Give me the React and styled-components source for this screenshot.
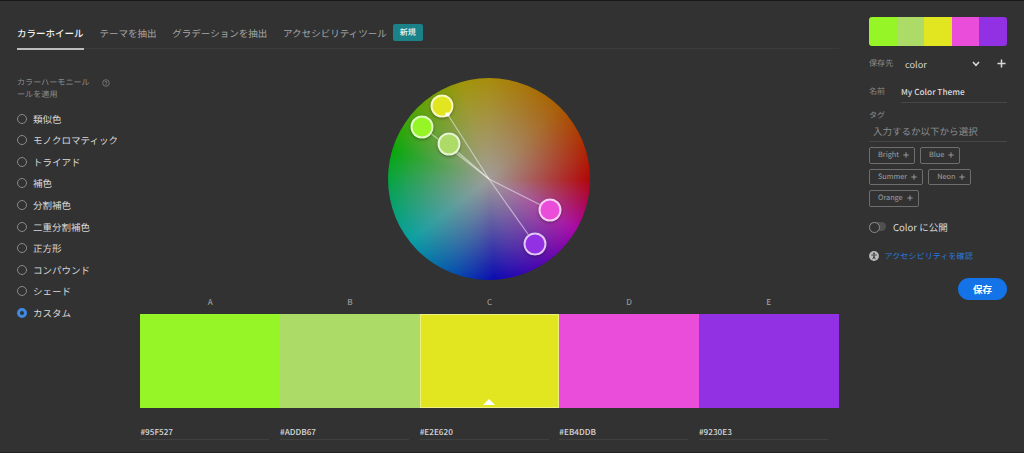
import React, { useState } from "react";
import styled, { createGlobalStyle } from "styled-components";

const swatches = [
  { label: "A", hex: "#95F527", x: 34, y: 48.5 },
  { label: "B", hex: "#ADDB67", x: 60.5, y: 66 },
  { label: "C", hex: "#E2E620", x: 54, y: 27.5 },
  { label: "D", hex: "#EB4DDB", x: 161.5, y: 131.5 },
  { label: "E", hex: "#9230E3", x: 147, y: 166 },
];

const tabs = ["カラーホイール", "テーマを抽出", "グラデーションを抽出", "アクセシビリティツール"];

const harmonies = [
  "類似色",
  "モノクロマティック",
  "トライアド",
  "補色",
  "分割補色",
  "二重分割補色",
  "正方形",
  "コンパウンド",
  "シェード",
  "カスタム",
];

const tags = ["Bright", "Blue", "Summer", "Neon", "Orange"];

const Plus = ({ size, weight }) => (
  <svg width={size} height={size} viewBox="0 0 10 10" fill="none" stroke="currentColor" strokeWidth={weight}>
    <path d="M5 0.5V9.5M0.5 5H9.5" />
  </svg>
);

const App = () => {
  const [tab, setTab] = useState(0);
  const [harmony, setHarmony] = useState("カスタム");
  const [active, setActive] = useState(2);

  return (
    <Page>
      <GlobalStyle />
      <Main>
        <Tabs>
          {tabs.map((name, index) => (
            <Tab key={name} $active={index === tab} onClick={() => setTab(index)}>
              {name}
            </Tab>
          ))}
          <Badge>新規</Badge>
        </Tabs>
        <Body>
          <Harmony>
            <HarmonyTitle>
              <span>カラーハーモニールールを適用</span>
              <svg width="8" height="8" viewBox="0 0 8 8" fill="none" stroke="currentColor">
                <circle cx="4" cy="4" r="3.3" strokeWidth="0.7" />
                <path d="M3 3.2C3 2 5 2 5 3.1C5 3.8 4 3.8 4 4.7M4 5.2V6" strokeWidth="0.8" />
              </svg>
            </HarmonyTitle>
            {harmonies.map((name) => (
              <Option key={name} onClick={() => setHarmony(name)}>
                <Radio $checked={name === harmony} />
                {name}
              </Option>
            ))}
          </Harmony>
          <Workspace>
            <Wheel>
              <Spokes viewBox="0 0 202 202">
                {swatches.map((s) => (
                  <line key={s.label} x1="101" y1="101" x2={s.x} y2={s.y} />
                ))}
              </Spokes>
              {swatches.map((s, index) => (
                <Marker
                  key={s.label}
                  $color={s.hex}
                  $active={index === active}
                  style={{ left: s.x, top: s.y }}
                />
              ))}
            </Wheel>
            <Swatches>
              {swatches.map((s, index) => (
                <Column key={s.label} onClick={() => setActive(index)}>
                  <Letter>{s.label}</Letter>
                  <Block $color={s.hex} $active={index === active}>
                    {index === active && (
                      <svg width="12" height="6" viewBox="0 0 12 6">
                        <path d="M0 6L6 0L12 6Z" fill="#fff" />
                      </svg>
                    )}
                  </Block>
                  <Hex>{s.hex}</Hex>
                </Column>
              ))}
            </Swatches>
          </Workspace>
        </Body>
      </Main>
      <Sidebar>
        <Preview>
          {swatches.map((s) => (
            <PreviewColor key={s.label} $color={s.hex} />
          ))}
        </Preview>
        <SaveTo>
          <Label>保存先</Label>
          <Library>color</Library>
          <svg width="8" height="6" viewBox="0 0 8 6" fill="none" stroke="#ddd" strokeWidth="1.5">
            <path d="M1 1L4 4.3L7 1" />
          </svg>
          <AddLibrary>
            <Plus size={9} weight={1.7} />
          </AddLibrary>
        </SaveTo>
        <NameRow>
          <Label>名前</Label>
          <NameField>My Color Theme</NameField>
        </NameRow>
        <TagLabel>タグ</TagLabel>
        <TagField>入力するか以下から選択</TagField>
        <Tags>
          {tags.map((tag) => (
            <Tag key={tag}>
              {tag}
              <Plus size={6} weight={1.5} />
            </Tag>
          ))}
        </Tags>
        <Publish>
          <Toggle />
          Color に公開
        </Publish>
        <CheckLink>
          <svg width="10" height="10" viewBox="0 0 10 10">
            <circle cx="5" cy="5" r="4.9" fill="#bbb" />
            <circle cx="5" cy="2.3" r="0.9" fill="#323232" />
            <path d="M2.3 4H7.7M5 4V6M5 5.6L3.7 8.2M5 5.6L6.3 8.2" stroke="#323232" strokeWidth="0.9" fill="none" />
          </svg>
          アクセシビリティを確認
        </CheckLink>
        <SaveButton>保存</SaveButton>
      </Sidebar>
    </Page>
  );
};

export default App;

const GlobalStyle = createGlobalStyle`
  * {
    box-sizing: border-box;
  }

  body {
    margin: 0;
    background: #323232;
    overflow: hidden;
  }
`;

const Page = styled.div`
  display: flex;
  justify-content: space-between;
  height: 453px;
  padding: 0 17px 0 17px;
  border-top: 1px solid #181818;
  border-bottom: 1px solid #222;
  background: #323232;
  color: #d8d8d8;
  font-family: "Noto Sans CJK JP", sans-serif;
  font-size: 9.52px;
  text-rendering: geometricPrecision;
  white-space: nowrap;
`;

const Main = styled.div`
  width: 821.6px;
`;

const Tabs = styled.div`
  display: flex;
  height: 48px;
  border-bottom: 1px solid #3c3c3c;
`;

const Tab = styled.div`
  height: 49px;
  margin-right: 15.8px;
  padding-top: 25px;
  line-height: 14px;
  color: ${(props) => (props.$active ? "#f0f0f0" : "#a6a6a6")};
  font-weight: ${(props) => (props.$active ? 500 : 400)};
  border-bottom: ${(props) => (props.$active ? "2px solid #bcbcbc" : "none")};
  cursor: pointer;
`;

const Badge = styled.span`
  width: 30px;
  height: 17px;
  margin: 23px 0 0 -9.8px;
  border-radius: 2px;
  background: #1b828a;
  color: #e8f4f4;
  font-size: 8px;
  font-weight: 500;
  line-height: 17px;
  text-align: center;
`;

const Body = styled.div`
  display: flex;
`;

const Harmony = styled.div`
  width: 123.4px;
  padding-top: 28px;
`;

const HarmonyTitle = styled.div`
  display: flex;
  height: 31px;
  color: #8c8c8c;
  font-size: 8.1px;
  line-height: 11.5px;

  span {
    width: 74px;
    white-space: normal;
    word-break: break-all;
  }

  svg {
    margin: 2px 0 0 11px;
  }
`;

const Option = styled.div`
  display: flex;
  align-items: center;
  height: 21.55px;
  cursor: pointer;
`;

const Radio = styled.span`
  width: 10px;
  height: 10px;
  margin-right: 6px;
  border-radius: 50%;
  border: ${(props) => (props.$checked ? "3px solid #3f8ae0" : "1.5px solid #8a8a8a")};
`;

const Workspace = styled.div`
  flex: 1;
  padding-top: 29px;
`;

const Wheel = styled.div`
  position: relative;
  width: 202px;
  height: 202px;
  margin: 0 auto;
  border-radius: 50%;
  background:
    radial-gradient(circle closest-side, #a09c98 0%, rgba(160, 156, 152, 0) 100%),
    conic-gradient(
      #a88c0c 0deg,
      #aa5c04 45deg,
      #b20606 90deg,
      #a808a8 120deg,
      #4c06b0 150deg,
      #0a0ab0 177deg,
      #0650ac 200deg,
      #08a0a4 232deg,
      #06a258 262deg,
      #06a80c 286deg,
      #5ca406 315deg,
      #a0960a 344deg,
      #a88c0c 360deg
    );
`;

const Spokes = styled.svg`
  position: absolute;
  inset: 0;

  line {
    stroke: rgba(255, 255, 255, 0.5);
    stroke-width: 1.2;
  }
`;

const Marker = styled.div`
  position: absolute;
  width: 23px;
  height: 23px;
  border: 2px solid rgba(255, 255, 255, 0.72);
  border-radius: 50%;
  background: ${(props) => props.$color};
  box-shadow: 0 1px 3px rgba(0, 0, 0, 0.35);
  transform: translate(-50%, -50%);

  &::after {
    content: "";
    display: ${(props) => (props.$active ? "block" : "none")};
    position: absolute;
    right: 2px;
    bottom: -1px;
    width: 4px;
    height: 4px;
    border-radius: 1px;
    background: #fff;
  }
`;

const Swatches = styled.div`
  display: grid;
  grid-template-columns: repeat(5, 1fr);
  padding-top: 15px;
`;

const Column = styled.div`
  min-width: 0;
`;

const Letter = styled.div`
  height: 19px;
  color: #a8a8a8;
  font-size: 8.2px;
  line-height: 15px;
  text-align: center;
`;

const Block = styled.div`
  display: flex;
  align-items: flex-end;
  justify-content: center;
  height: 94px;
  padding-bottom: ${(props) => (props.$active ? "2px" : "3px")};
  border: ${(props) => (props.$active ? "1px solid #eeef80" : "none")};
  background: ${(props) => props.$color};
`;

const Hex = styled.div`
  width: 129px;
  height: 32px;
  padding-top: 17px;
  border-bottom: 1px solid #404040;
  font-size: 8.2px;
  font-weight: 500;
  line-height: 15px;
`;

const Sidebar = styled.div`
  width: 138px;
  padding-top: 16px;
`;

const Preview = styled.div`
  display: flex;
  height: 29px;
  border-radius: 3px;
  overflow: hidden;
`;

const PreviewColor = styled.div`
  flex: 1;
  background: ${(props) => props.$color};
`;

const Label = styled.span`
  color: #8c8c8c;
  font-size: 8.1px;
`;

const SaveTo = styled.div`
  display: flex;
  align-items: center;
  height: 35px;
`;

const Library = styled.span`
  width: 67px;
  margin-left: 11.7px;
  font-size: 9.2px;
`;

const AddLibrary = styled.span`
  display: flex;
  margin-left: 17px;
`;

const NameRow = styled.div`
  display: flex;
  justify-content: space-between;
  height: 21px;
  margin-top: 1px;
  line-height: 20px;
`;

const NameField = styled.div`
  width: 106px;
  border-bottom: 1px solid #464646;
  font-size: 8.25px;
  font-weight: 500;
`;

const TagLabel = styled(Label)`
  display: block;
  padding-top: 6px;
  line-height: 14px;
`;

const TagField = styled.div`
  height: 19px;
  padding-left: 4px;
  border-bottom: 1px solid #464646;
  color: #8c8c8c;
  line-height: 16px;
`;

const Tags = styled.div`
  display: flex;
  flex-wrap: wrap;
  gap: 5px;
  padding-top: 5px;
`;

const Tag = styled.div`
  display: flex;
  align-items: center;
  gap: 4px;
  height: 16.6px;
  padding: 0 5px 0 8px;
  border: 1px solid #6e6e6e;
  border-radius: 2px;
  color: #a0a0a0;
  font-size: 7.3px;
`;

const Publish = styled.div`
  display: flex;
  align-items: center;
  gap: 7px;
  margin-top: 13px;
  height: 14px;
`;

const Toggle = styled.span`
  width: 17px;
  height: 9px;
  border-radius: 5px;
  background: #505050;

  &::before {
    content: "";
    display: block;
    width: 9px;
    height: 9px;
    border: 1.5px solid #8c8c8c;
    border-radius: 50%;
    background: #323232;
  }
`;

const CheckLink = styled.div`
  display: flex;
  align-items: center;
  gap: 5.5px;
  margin-top: 15.5px;
  height: 14px;
  color: #2878d8;
  font-size: 8.12px;
`;

const SaveButton = styled.button`
  display: block;
  width: 49px;
  height: 22px;
  margin: 14.7px 0 0 auto;
  padding: 0;
  border: none;
  border-radius: 11px;
  background: #1473e6;
  color: #fff;
  font: inherit;
  font-weight: 700;
  line-height: 20px;
`;
